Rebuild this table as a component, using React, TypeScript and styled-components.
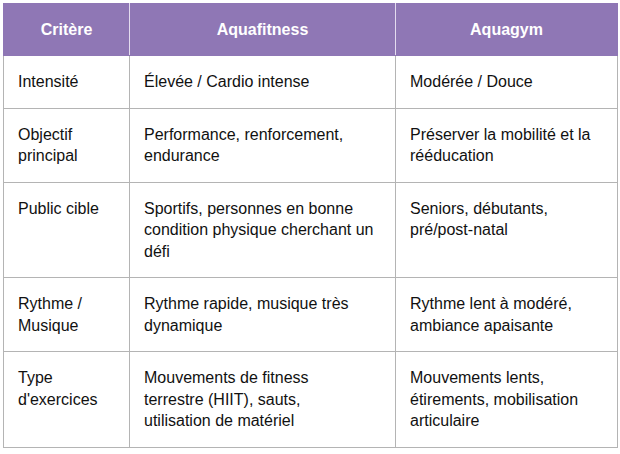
import * as React from "react";
import styled, { createGlobalStyle } from "styled-components";

const GlobalStyle = createGlobalStyle`
  body {
    margin: 0;
    background: #ffffff;
    font-family: "Liberation Sans", Arial, sans-serif;
  }
`;

// each cell is a list of lines, broken as in the original layout
const rows: string[][][] = [
  [["Intensité"], ["Élevée / Cardio intense"], ["Modérée / Douce"]],
  [
    ["Objectif", "principal"],
    ["Performance, renforcement,", "endurance"],
    ["Préserver la mobilité et la", "rééducation"],
  ],
  [
    ["Public cible"],
    ["Sportifs, personnes en bonne", "condition physique cherchant un", "défi"],
    ["Seniors, débutants,", "pré/post-natal"],
  ],
  [
    ["Rythme /", "Musique"],
    ["Rythme rapide, musique très", "dynamique"],
    ["Rythme lent à modéré,", "ambiance apaisante"],
  ],
  [
    ["Type", "d'exercices"],
    ["Mouvements de fitness", "terrestre (HIIT), sauts,", "utilisation de matériel"],
    ["Mouvements lents,", "étirements, mobilisation", "articulaire"],
  ],
];

const Page = styled.div`
  padding: 3px 3px 0 3px;
`;

const Table = styled.table`
  width: 614px;
  border-collapse: collapse;
  table-layout: fixed;
  font-size: 16px;
  color: #111111;
`;

const HeadCell = styled.th`
  height: 51px;
  padding: 0 14px;
  background: #8f77b5;
  color: #ffffff;
  font-weight: 700;
  font-size: 16px;
  text-align: center;
  border: 1px solid #8f77b5;
  border-right: 1px solid #e4dcef;

  &:last-child {
    border-right: 1px solid #8f77b5;
  }
`;

const Cell = styled.td`
  padding: 15px 14px;
  line-height: 21.5px;
  vertical-align: top;
  border: 1px solid #b4b4b4;
`;

const Line = styled.span`
  display: block;
  white-space: nowrap;
`;

const App: React.FC = () => {
  return (
    <Page>
      <GlobalStyle />
      <Table>
        <colgroup>
          <col style={{ width: 126 }} />
          <col style={{ width: 266 }} />
          <col style={{ width: 222 }} />
        </colgroup>
        <thead>
          <tr>
            <HeadCell>Critère</HeadCell>
            <HeadCell>Aquafitness</HeadCell>
            <HeadCell>Aquagym</HeadCell>
          </tr>
        </thead>
        <tbody>
          {rows.map((r) => (
            <tr key={r[0][0]}>
              {r.map((cell, i) => (
                <Cell key={i}>
                  {cell.map((l) => (
                    <Line key={l}>{l}</Line>
                  ))}
                </Cell>
              ))}
            </tr>
          ))}
        </tbody>
      </Table>
    </Page>
  );
};

export default App;
